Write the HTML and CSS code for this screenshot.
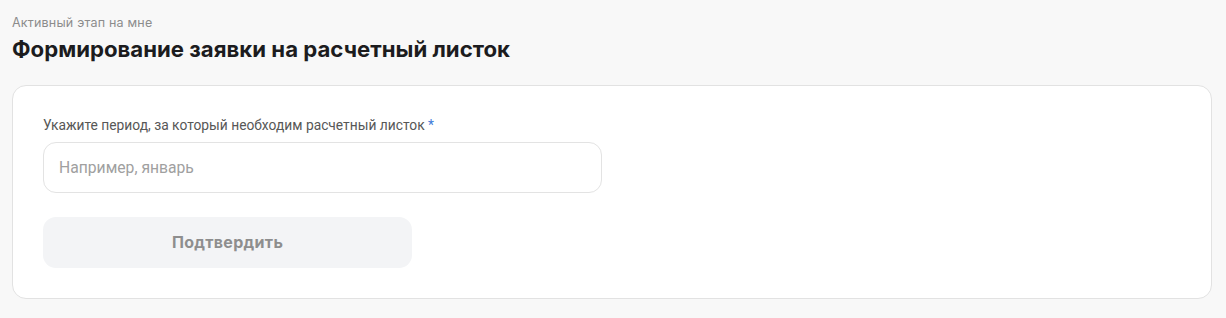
FILE: index.html
```html
<!DOCTYPE html>
<html lang="ru">
<head>
<meta charset="utf-8">
<link rel="stylesheet" href="styles.css">
</head>
<body>
<div class="page">
  <div class="header">
    <div class="stage">Активный этап на мне</div>
    <h1 class="title">Формирование заявки на расчетный листок</h1>
  </div>
  <div class="card">
    <label class="label">Укажите период, за который необходим расчетный листок <span class="req">*</span></label>
    <div class="input">Например, январь</div>
    <button class="btn">Подтвердить</button>
  </div>
</div>
</body>
</html>
```
FILE: styles.css
```css
html, body { margin: 0; padding: 0; background: #f8f8f8; }
body { font-family: Inter, "Noto Sans", sans-serif; width: 1226px; height: 318px; overflow: hidden; }
.page { padding: 15px 14px 0 12px; display: flex; flex-direction: column; }
.header { display: flex; flex-direction: column; }
.stage { font-size: 12.5px; letter-spacing: 0.2px; color: #8c8c8c; line-height: 16px; }
.title { margin: 3px 0 0; font-size: 22.2px; font-weight: 700; color: #1c1c1e; line-height: 30px; }
.card { margin-top: 21px; background: #fff; border: 1px solid #e2e2e2; border-radius: 14px; padding: 30px; height: 152px; display: flex; flex-direction: column; align-items: flex-start; }
.label { font-family: Roboto, sans-serif; font-size: 13.8px; color: #575757; line-height: 18px; }
.req { color: #3d7bd9; }
.input { margin-top: 8px; box-sizing: border-box; width: 559px; height: 51px; border: 1px solid #e3e3e3; border-radius: 13px; padding: 0 15px; display: flex; align-items: center; font-family: Roboto, sans-serif; font-size: 15.7px; color: #a0a0a0; }
.btn { margin-top: 24px; width: 369px; height: 52px; border: none; border-radius: 13px; background: #f3f4f6; font-family: Inter, sans-serif; font-size: 16px; letter-spacing: 0.3px; font-weight: 700; color: #8e8e8e; }
```
